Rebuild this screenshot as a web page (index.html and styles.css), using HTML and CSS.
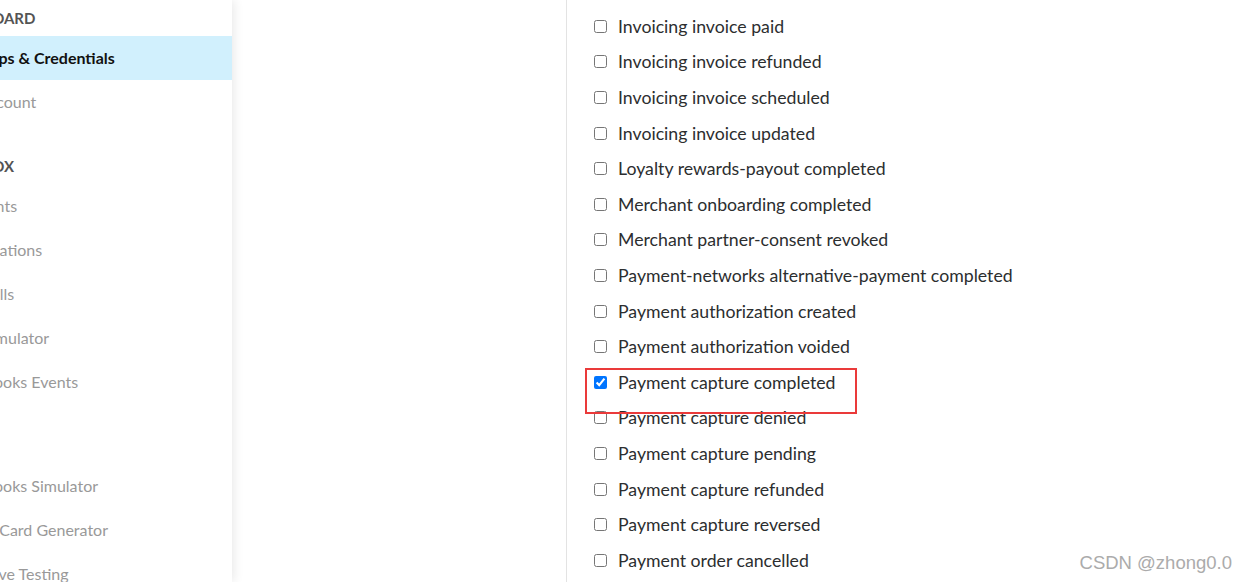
FILE: index.html
```html
<!DOCTYPE html>
<html>
<head>
<meta charset="utf-8">
<link rel="stylesheet" href="styles.css">
</head>
<body>
<div class="page">
  <aside class="sidebar">
    <div class="side-inner">
      <div class="side-head">Dashboard</div>
      <div class="side-item active">My Apps &amp; Credentials</div>
      <div class="side-item">My Account</div>
      <div class="side-head">Sandbox</div>
      <div class="side-item">Accounts</div>
      <div class="side-item">Notifications</div>
      <div class="side-item">API Calls</div>
      <div class="side-item">IPN Simulator</div>
      <div class="side-item">Webhooks Events</div>
      <div class="side-head">Mock</div>
      <div class="side-item">Webhooks Simulator</div>
      <div class="side-item">Credit Card Generator</div>
      <div class="side-item">Negative Testing</div>
    </div>
  </aside>
  <main class="main">
    <div class="events">
      <ul class="event-list">
        <li class="event"><input type="checkbox"><span>Invoicing invoice created</span></li>
        <li class="event"><input type="checkbox"><span>Invoicing invoice paid</span></li>
        <li class="event"><input type="checkbox"><span>Invoicing invoice refunded</span></li>
        <li class="event"><input type="checkbox"><span>Invoicing invoice scheduled</span></li>
        <li class="event"><input type="checkbox"><span>Invoicing invoice updated</span></li>
        <li class="event"><input type="checkbox"><span>Loyalty rewards-payout completed</span></li>
        <li class="event"><input type="checkbox"><span>Merchant onboarding completed</span></li>
        <li class="event"><input type="checkbox"><span>Merchant partner-consent revoked</span></li>
        <li class="event"><input type="checkbox"><span>Payment-networks alternative-payment completed</span></li>
        <li class="event"><input type="checkbox"><span>Payment authorization created</span></li>
        <li class="event"><input type="checkbox"><span>Payment authorization voided</span></li>
        <li class="event highlighted"><input type="checkbox" checked><span>Payment capture completed</span></li>
        <li class="event"><input type="checkbox"><span>Payment capture denied</span></li>
        <li class="event"><input type="checkbox"><span>Payment capture pending</span></li>
        <li class="event"><input type="checkbox"><span>Payment capture refunded</span></li>
        <li class="event"><input type="checkbox"><span>Payment capture reversed</span></li>
        <li class="event"><input type="checkbox"><span>Payment order cancelled</span></li>
      </ul>
    </div>
  </main>
  <div class="watermark">CSDN @zhong0.0</div>
</div>
</body>
</html>
```
FILE: styles.css
```css
* { box-sizing: border-box; }
html, body { margin: 0; padding: 0; }
body {
  width: 1248px;
  height: 582px;
  overflow: hidden;
  background: #fff;
  font-family: Lato, "Open Sans", sans-serif;
}
.page {
  position: relative;
  display: flex;
  width: 1248px;
  height: 582px;
  overflow: hidden;
}
.sidebar {
  width: 232px;
  flex: 0 0 232px;
  height: 100%;
  overflow: hidden;
  background: #fff;
  box-shadow: 2px 0 10px rgba(0,0,0,0.09);
  position: relative;
  z-index: 1;
}
.side-inner {
  margin-top: -24px;
}
.side-head {
  height: 60px;
  padding-top: 24px;
  line-height: 36px;
  margin-left: -59px;
  font-size: 15px;
  font-weight: 700;
  color: #545454;
  text-transform: uppercase;
  white-space: nowrap;
}
.side-item {
  height: 44px;
  line-height: 44px;
  margin-left: -48px;
  font-size: 16px;
  color: #999;
  white-space: nowrap;
}
.side-item.active {
  margin-left: 0;
  text-indent: -48px;
  background: #d1f0fd;
  color: #111;
  font-weight: 700;
}
.main {
  flex: 1;
  padding-left: 334px;
}
.events {
  display: flow-root;
  height: 100%;
  border-left: 1px solid #e3e3e3;
  padding-left: 27px;
}
.event-list {
  list-style: none;
  margin: -27px 0 0 0;
  padding: 0;
}
.event {
  display: flex;
  align-items: center;
  height: 35.6px;
  font-size: 17.7px;
  color: #2c2e2f;
  white-space: nowrap;
}
.event input {
  margin: 0 11px 0 0;
  width: 13px;
  height: 13px;
}
.event.highlighted {
  position: relative;
}
.event.highlighted::after {
  content: "";
  position: absolute;
  left: -9px;
  top: 3.5px;
  width: 268px;
  height: 42px;
  border: 2px solid #ea3a3a;
  pointer-events: none;
}
.watermark {
  position: absolute;
  right: 16px;
  bottom: 8px;
  font-family: "Liberation Sans", Arial, sans-serif;
  font-size: 18.5px;
  color: #ababab;
  text-shadow: 0 0 1px #fff;
}
```
